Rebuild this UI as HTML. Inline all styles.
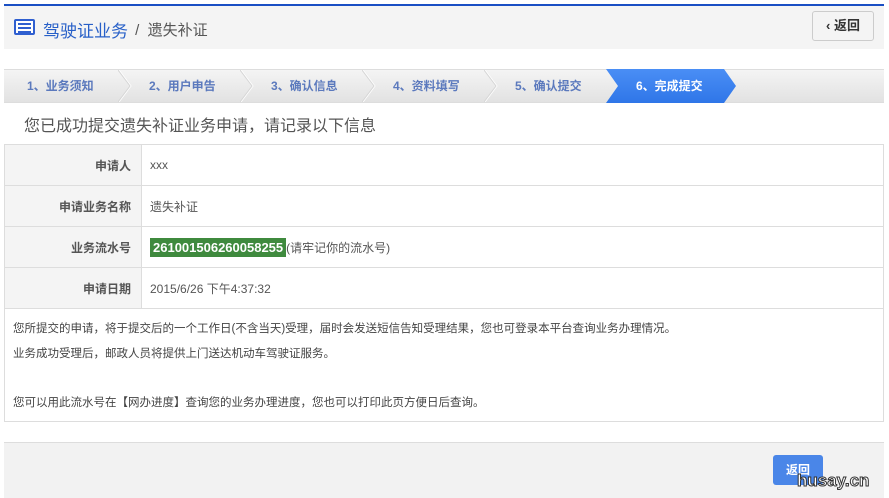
<!DOCTYPE html>
<html><head><meta charset="utf-8"><style>
*{margin:0;padding:0;box-sizing:border-box}
body{width:889px;height:498px;background:#fff;font-family:"Liberation Sans","Noto Sans CJK SC",sans-serif;position:relative;overflow:hidden;color:#555}
.top{position:absolute;left:4px;top:4px;width:880px;height:2px;background:#1a4fc4}
.hdr{position:absolute;left:4px;top:6px;width:880px;height:43px;background:#f4f4f4}
.hdr .t{position:absolute;left:39px;top:11px;font-size:17px;color:#2860c8}
.hdr .s{position:absolute;left:127px;top:13px;font-size:15px;color:#555}
.ico{position:absolute;left:10px;top:13px;width:21px;height:16px;border:2px solid #2f5fd0;border-radius:2px;background:#fff}
.ico i{position:absolute;left:2px;right:2px;height:2px;background:#2f5fd0}
.back{position:absolute;left:808px;top:5px;width:62px;height:30px;border:1px solid #ccc;border-radius:3px;background:#f4f4f4;font-size:13px;font-weight:bold;color:#333;text-align:center;line-height:28px}
.steps{position:absolute;left:4px;top:69px;width:880px;height:34px;background:linear-gradient(#f4f4f4,#e2e2e2);border-top:1px solid #ddd;border-bottom:1px solid #ddd}
.st{position:absolute;top:0;height:32px;line-height:32px;font-size:12px;font-weight:bold;color:#5b79bd}
.sep{position:absolute;top:0;width:14px;height:32px}
.act{position:absolute;left:602px;top:-1px;height:34px;width:130px;background:linear-gradient(#4a8ef5,#2f76e8);clip-path:polygon(0 0,118px 0,130px 50%,118px 100%,0 100%,12px 50%);color:#fff;font-size:12px;font-weight:bold;line-height:34px;padding-left:30px}
.ttl{position:absolute;left:24px;top:112px;font-size:16px;color:#555}
table{position:absolute;left:4px;top:144px;width:880px;border-collapse:collapse}
td{border:1px solid #ddd;height:41px;font-size:12px}
td.l{width:137px;background:#f4f4f4;text-align:right;padding-right:10px;font-weight:bold;color:#555}
td.v{padding-left:8px;color:#555}
.num{background:#3f8a3e;color:#fff;font-weight:bold;font-size:13px;padding:2px 3px}
.note{position:absolute;left:4px;top:308px;width:880px;height:114px;border:1px solid #ddd;border-top:none;font-size:11.5px;color:#444;padding:9px 8px;line-height:24.5px}
.foot{position:absolute;left:4px;top:442px;width:880px;height:56px;background:#f2f2f2;border-top:1px solid #ddd}
.btn{position:absolute;left:773px;top:455px;width:50px;height:30px;background:#4a86e8;border-radius:3px;color:#fff;font-size:12px;font-weight:bold;text-align:center;line-height:30px}
.wm{position:absolute;left:797px;top:471px;font-size:17px;font-weight:bold;color:#fff;-webkit-text-stroke:1px #333;font-family:"Liberation Sans",sans-serif}
</style></head><body>
<div class="top"></div>
<div class="hdr"><div class="ico"><i style="top:2px"></i><i style="top:6px"></i><i style="top:10px"></i></div><span class="t">驾驶证业务</span><span class="s">&nbsp;/&nbsp; 遗失补证</span>
<div class="back">‹ 返回</div></div>
<div class="steps">
<span class="st" style="left:23px">1、业务须知</span>
<span class="st" style="left:145px">2、用户申告</span>
<span class="st" style="left:267px">3、确认信息</span>
<span class="st" style="left:389px">4、资料填写</span>
<span class="st" style="left:511px">5、确认提交</span>
<svg class="sep" style="left:114px" viewBox="0 0 14 32"><path d="M1 0L13 16L1 32" stroke="#fff" fill="none"/><path d="M0 0L12 16L0 32" stroke="#d6d6d6" fill="none"/></svg>
<svg class="sep" style="left:236px" viewBox="0 0 14 32"><path d="M1 0L13 16L1 32" stroke="#fff" fill="none"/><path d="M0 0L12 16L0 32" stroke="#d6d6d6" fill="none"/></svg>
<svg class="sep" style="left:358px" viewBox="0 0 14 32"><path d="M1 0L13 16L1 32" stroke="#fff" fill="none"/><path d="M0 0L12 16L0 32" stroke="#d6d6d6" fill="none"/></svg>
<svg class="sep" style="left:480px" viewBox="0 0 14 32"><path d="M1 0L13 16L1 32" stroke="#fff" fill="none"/><path d="M0 0L12 16L0 32" stroke="#d6d6d6" fill="none"/></svg>
<div class="act">6、完成提交</div>
</div>
<div class="ttl">您已成功提交遗失补证业务申请，请记录以下信息</div>
<table>
<tr><td class="l">申请人</td><td class="v">xxx</td></tr>
<tr><td class="l">申请业务名称</td><td class="v">遗失补证</td></tr>
<tr><td class="l">业务流水号</td><td class="v"><span class="num">261001506260058255</span>(请牢记你的流水号)</td></tr>
<tr><td class="l">申请日期</td><td class="v">2015/6/26 下午4:37:32</td></tr>
</table>
<div class="note">您所提交的申请，将于提交后的一个工作日(不含当天)受理，届时会发送短信告知受理结果，您也可登录本平台查询业务办理情况。<br>业务成功受理后，邮政人员将提供上门送达机动车驾驶证服务。<br><br>您可以用此流水号在【网办进度】查询您的业务办理进度，您也可以打印此页方便日后查询。</div>
<div class="foot"></div>
<div class="btn">返回</div>
<div class="wm">husay.cn</div>
</body></html>
